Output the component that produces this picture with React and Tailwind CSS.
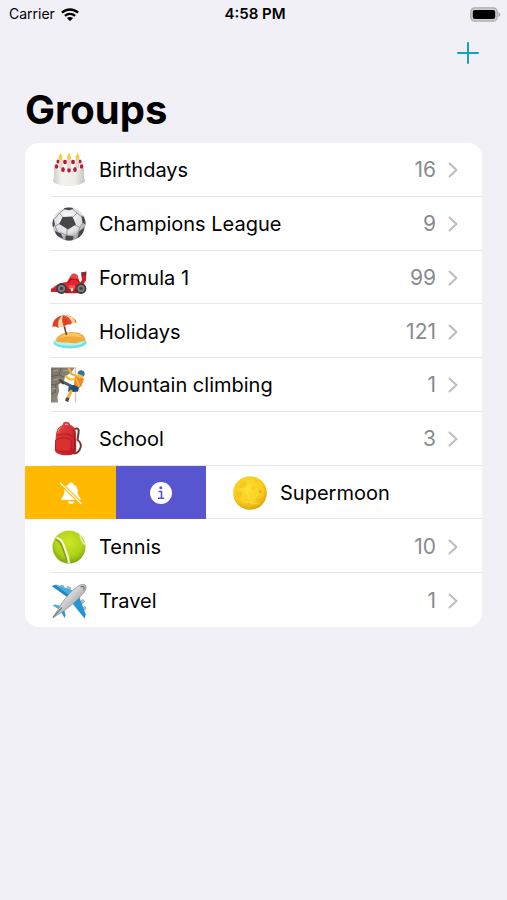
import clsx from 'clsx';

function CakeIcon() {
  return (
    <svg viewBox="0 0 36 36" className="size-9" aria-hidden="true">
      <defs>
        <linearGradient id="cake-side" x1="0" x2="1" y1="0" y2="0">
          <stop offset="0" stopColor="#d3d0cb" />
          <stop offset="0.25" stopColor="#f4f2ee" />
          <stop offset="0.7" stopColor="#efede9" />
          <stop offset="1" stopColor="#c9c6c0" />
        </linearGradient>
      </defs>
      <ellipse cx="18" cy="28.500" rx="16" ry="5" fill="#c9c7c3" />
      <path d="M3 14v14.500c0 3 6.700 5 15 5s15-2 15-5V14z" fill="url(#cake-side)" />
      <ellipse cx="18" cy="14" rx="15" ry="6" fill="#f7f5f0" stroke="#d6d3cc" strokeWidth="0.600" />
      <g fill="#b5173c">
        <ellipse cx="5.500" cy="14.500" rx="1.700" ry="2.200" />
        <ellipse cx="30.500" cy="14.500" rx="1.700" ry="2.200" />
        <ellipse cx="12" cy="17.500" rx="1.800" ry="2.500" />
        <ellipse cx="24" cy="17.500" rx="1.800" ry="2.500" />
        <ellipse cx="18" cy="18" rx="1.800" ry="2.500" />
        <ellipse cx="7" cy="9.500" rx="1.500" ry="1.900" />
        <ellipse cx="29" cy="9.500" rx="1.500" ry="1.900" />
        <ellipse cx="14" cy="10" rx="1.900" ry="2.300" />
        <ellipse cx="22" cy="10" rx="1.900" ry="2.300" />
      </g>
      <g fill="#f0dccb" stroke="#bfa795" strokeWidth="0.400">
        <rect x="8.400" y="7" width="2.400" height="9" rx="0.800" />
        <rect x="16.800" y="7" width="2.400" height="9.500" rx="0.800" />
        <rect x="25.200" y="7" width="2.400" height="9" rx="0.800" />
      </g>
      <g fill="#f3cf45">
        <path d="M9.500 1c1.800 2.600 2.400 4 1.900 5.400-.7 1.600-3.100 1.600-3.800 0C7.100 5 8 3.500 9.500 1z" />
        <path d="M18 1c1.800 2.600 2.400 4 1.900 5.400-.7 1.600-3.100 1.600-3.800 0C15.600 5 16.500 3.500 18 1z" />
        <path d="M26.500 1c1.800 2.600 2.400 4 1.900 5.400-.7 1.600-3.100 1.600-3.800 0-.5-1.400.4-2.900 1.900-5.400z" />
      </g>
    </svg>
  );
}

function SoccerIcon() {
  return (
    <svg viewBox="0 0 36 36" className="size-9" aria-hidden="true">
      <defs>
        <radialGradient id="soccer-ball" cx="0.45" cy="0.35" r="0.65">
          <stop offset="0" stopColor="#ffffff" />
          <stop offset="0.65" stopColor="#dedee1" />
          <stop offset="1" stopColor="#919196" />
        </radialGradient>
        <clipPath id="soccer-clip">
          <circle cx="18" cy="18" r="16.500" />
        </clipPath>
      </defs>
      <circle cx="18" cy="18" r="16.500" fill="url(#soccer-ball)" />
      <g clipPath="url(#soccer-clip)">
        <g fill="none" stroke="#8e8e93" strokeWidth="0.900">
          <path d="M12 11.500 8.500 7M21.500 11.500 26 7M24 19l5 2.500M16 22.500v7M9 17.500 4 20M8.500 7l-5 6M8.500 7 14 2.500M26 7l-5-4.500M26 7l6 5M29 21.500l3.500-6M29 21.500 26.500 28M16 29.500l-6.500-3M16 29.500l6 1M4 20l-2-5M4 20l3 7" />
        </g>
        <g fill="#46464b">
          <path d="m11.500 11 9.800-.5 3.700 8-8 5-8.800-5.500z" />
          <path d="m12.500 0 9 0 .5 3-4 1.200-5-1z" />
          <path d="m30.500 10.500 4.500-.5v9l-3.500-2.500z" />
          <path d="m28 25.500 5-4-1 9-5.500 1.500z" />
          <path d="m14.500 29.500 8 .800-1 5h-7z" />
          <path d="m0 14 2.800-1.500 1 5.500-1.300 3-3 1z" />
          <path d="m4 25 6 2.500 2 5-7-3z" />
        </g>
      </g>
    </svg>
  );
}

function RaceCarIcon() {
  return (
    <svg viewBox="0 0 36 36" className="size-9" aria-hidden="true">
      <path d="m30 12.500 5.500-1-.5 9-3 4h-4l3-4.500z" fill="#cf1f27" />
      <path d="m30.500 12.500 4.500-.700-.3 4-3.700.600z" fill="#7c3039" />
      <path d="M1 29c3-4 9-6.500 15-7l3-5c1-2.500 4-3.500 6.500-2 2 1 2 4 2.500 6l4 3 1 6-14 2L4 31z" fill="#e4262c" />
      <path d="m19 17 2-3c2-1 4-.5 5.500 1.500l.5 3.500-4 .5z" fill="#ee4340" />
      <path d="m17 22.500 3-3.500 6 .5 2 2.500" fill="none" stroke="#9c1019" strokeWidth="1.100" />
      <path d="M0 28.500 6 28l1.500 4H0z" fill="#d1202a" />
      <path d="M14 28.500h16v4.700H14z" fill="#b8141d" />
      <path d="m18 25 6 .5-.5 4-5.500-.5z" fill="#f35a55" />
      <path d="m19.500 28.500 2.500-.300.200 3-2.200.300z" fill="#f6e3df" />
      <circle cx="10.500" cy="28.500" r="5.400" fill="#3a3d40" />
      <circle cx="10.500" cy="28.500" r="3.600" fill="#7c7f82" />
      <circle cx="10.500" cy="28.500" r="1.800" fill="#44474a" />
      <circle cx="30" cy="28.500" r="5.400" fill="#3a3d40" />
      <circle cx="30" cy="28.500" r="3.600" fill="#7c7f82" />
      <circle cx="30" cy="28.500" r="1.800" fill="#44474a" />
    </svg>
  );
}

function BeachIcon() {
  return (
    <svg viewBox="0 0 36 36" className="size-9" aria-hidden="true">
      <ellipse cx="19" cy="28.500" rx="16.500" ry="6" fill="#6fe3e2" />
      <ellipse cx="18.500" cy="27" rx="15" ry="4.800" fill="#b8f3ee" />
      <path d="M5 26c1-4.500 8-8 16-8 7.500 0 13 3.500 13.500 7.500 0 2-4 1.500-7 3-4 1.800-7 .2-11 0-5-.2-11.500.500-11.500-2.500z" fill="#f2a93b" />
      <path d="M8 24c3-3.500 8-5 13-5s9.500 2 11.500 5.500C27 22 14 22 8 24z" fill="#fbc666" />
      <path d="m13 11 2.500 10" stroke="#6f4327" strokeWidth="1.600" />
      <path d="M1.500 13C1 7 6 1.800 12.500 1.200 19 .600 24.500 4 25.500 8.500c-2.500-.5-4.500.2-6 2-2.500-.8-5-.2-6.500 2.500-2-1.300-4-1-5.500 1C5.500 12.300 3 12 1.500 13z" fill="#e63b26" />
      <path d="M12 1.300C8 4 6.500 8 7.500 14c1.500-2 3.500-2.300 5.500-1 1.500-2.700 4-3.300 6.500-2.500C18.500 6.500 16 3 12 1.300z" fill="#fbe3a1" />
      <path d="M12 1.300C10.500 5 11 9 13 13c1.500-2.500 3.800-3.300 6.500-2.500-1-4.300-3.500-7.300-7.500-9.200z" fill="#e0402a" />
      <path d="M12.500 1.200c4.500.8 7.500 4 8.500 8.100 1.200-.8 2.700-1 4.500-.8C24.500 4 19.500.800 12.500 1.200z" fill="#f9dc92" />
      <path d="M21 3.500c2 1.300 3 3 3.500 5l1 0c-.5-2-2-4-4.500-5z" fill="#e63b26" />
    </svg>
  );
}

function ClimberIcon() {
  return (
    <svg viewBox="0 0 36 36" className="size-9" aria-hidden="true">
      <defs>
        <linearGradient id="rock" x1="0" x2="1" y1="0" y2="1">
          <stop offset="0" stopColor="#77716a" />
          <stop offset="0.500" stopColor="#8b8476" />
          <stop offset="1" stopColor="#b9b2a4" />
        </linearGradient>
      </defs>
      <path d="M0 .500h24l-5 6-5 3-1 5-5.500 3 .5 7-1.500 5 .5 6H0z" fill="url(#rock)" />
      <path d="M0 9.500 8 8l5 2M0 18l6-1 4-3M0 27l5-2M10 1 8 8M5 17l-1 8" fill="none" stroke="#675f55" />
      <path d="m2 4 5-1M12 4l6-1M2 13l5-1M1 22l4-.500" stroke="#aaa293" strokeWidth="1.200" />
      <path d="M24.500.500V35" stroke="#f3b4bf" strokeWidth="1.300" />
      <path d="m27 10-6.500-3L18 1.500" fill="none" stroke="#f2b02b" strokeWidth="2.200" strokeLinecap="round" strokeLinejoin="round" />
      <path d="m26 12-7 .5-4-3" fill="none" stroke="#f6bd35" strokeWidth="2.200" strokeLinecap="round" strokeLinejoin="round" />
      <path d="m24 10 6-1 3 3-2.500 7-4 3-4-2z" fill="#ef8a2c" />
      <path d="m25 11 3 8" stroke="#f8c64a" strokeWidth="1.600" />
      <path d="m18 18 5 0 5 2.500-1 4-5 .500-3-1-2 1z" fill="#244b78" />
      <path d="m20 19-7-3.500" stroke="#41606f" strokeWidth="3" strokeLinecap="round" />
      <path d="m12 16-2.500-2.500" stroke="#4b443c" strokeWidth="2.600" strokeLinecap="round" />
      <path d="m20.500 23-1.500 4-2 4" fill="none" stroke="#f2b02b" strokeWidth="2.800" />
      <path d="m15.500 30 3 1.200-1.500 4-3-1.700z" fill="#574557" />
      <circle cx="29.500" cy="8" r="3.200" fill="#f7bd36" />
      <path d="M26.500 6.500c.5-3 3-3.800 5-3 2.500 1 2.800 4 1.300 6-1.800-1.500-3.800-2.500-6.300-3z" fill="#2f73a5" />
    </svg>
  );
}

function BackpackIcon() {
  return (
    <svg viewBox="0 0 36 36" className="size-9" aria-hidden="true">
      <defs>
        <linearGradient id="pack" x1="0" x2="1" y1="0" y2="1">
          <stop offset="0" stopColor="#ea443f" />
          <stop offset="1" stopColor="#b51b24" />
        </linearGradient>
      </defs>
      <path d="M23 8c4-1.500 5.500 0 4.500 4l-1 7c3.500 2 4.500 6 2 10-1.500 2.500-3.500 3.500-6 3.500" fill="none" stroke="#743833" strokeWidth="2" />
      <path d="M12.500 5c0-4.500 5.500-4.500 6 0" fill="none" stroke="#c94347" strokeWidth="2" />
      <path d="M5 13C6 7 9.500 3.500 15.500 3.500c6 0 9.200 3 9.500 9l.3 15c0 4-2 6-6 6.500-4.500.500-8.800.200-11.800-1-3-1-4-3-3.700-6z" fill="url(#pack)" />
      <path d="M6 15c5-3 12-3 16 1" fill="none" stroke="#a31721" strokeWidth="0.800" />
      <path d="M4.500 19.500c3-3.500 12-3.500 15.500 0v9.500c-4 2.500-11.500 2-15.500-.5z" fill="#dc302f" stroke="#a01a23" strokeWidth="0.800" />
      <path d="M22.500 9c1.500 7 1.800 16 0 23" fill="none" stroke="#a01a23" />
      <path d="M10 6.500c-2 1-3 3-3 5" fill="none" stroke="#f7716a" strokeWidth="1.200" strokeLinecap="round" />
    </svg>
  );
}

function MoonIcon() {
  return (
    <svg viewBox="0 0 36 36" className="size-9" aria-hidden="true">
      <defs>
        <radialGradient id="moon" cx="0.45" cy="0.38" r="0.62">
          <stop offset="0" stopColor="#ffe135" />
          <stop offset="0.700" stopColor="#f8cc1d" />
          <stop offset="1" stopColor="#dea30c" />
        </radialGradient>
      </defs>
      <circle cx="18" cy="18" r="16.800" fill="url(#moon)" />
      <g fill="#e5ae16" opacity="0.300">
        <path d="M9 8c3-3 7-2 6 1s-2 4-5 4-3-3-1-5z" />
        <path d="M5 17c3-2 6 0 5 3s-4 3-5 1-1-3 0-4z" />
        <circle cx="21" cy="13" r="2" />
        <circle cx="28" cy="16" r="2" />
        <circle cx="27" cy="24" r="2.500" />
        <circle cx="17" cy="29" r="1.500" />
        <circle cx="24" cy="6" r="1.500" />
      </g>
      <circle cx="28.500" cy="17" r="0.800" fill="#c98d0c" />
      <path d="m19 28-4-11M19 28l7-9M19 28l-10-3M19 28l9 1" stroke="#fff06b" strokeWidth="0.500" opacity="0.800" />
    </svg>
  );
}

function TennisIcon() {
  return (
    <svg viewBox="0 0 36 36" className="size-9" aria-hidden="true">
      <defs>
        <radialGradient id="tennis-ball" cx="0.500" cy="0.350" r="0.650">
          <stop offset="0" stopColor="#cfe62a" />
          <stop offset="0.650" stopColor="#aed318" />
          <stop offset="1" stopColor="#7fa30f" />
        </radialGradient>
      </defs>
      <circle cx="18" cy="18" r="16.500" fill="url(#tennis-ball)" />
      <path d="M5 9.500c5 2 6.500 6 8 11 1.200 4 3 6.500 4.500 13" fill="none" stroke="#84a30f" strokeWidth="3.400" />
      <path d="M5.500 8.500c5.500 2 7 6.500 8.500 11.500 1.200 4 3.500 7 4 14" fill="none" stroke="#f3f7d9" strokeWidth="2.200" />
      <path d="M29 6.200c1 4 2.200 7 5.200 9.300" fill="none" stroke="#e7f0b5" strokeWidth="1.600" />
    </svg>
  );
}

function PlaneIcon() {
  return (
    <svg viewBox="0 0 36 36" className="size-9" aria-hidden="true">
      <defs>
        <linearGradient id="fuselage" x1="0" x2="1" y1="0" y2="1">
          <stop offset="0.250" stopColor="#f4f4f4" />
          <stop offset="0.750" stopColor="#9a9da2" />
        </linearGradient>
      </defs>
      <g fill="#bfc3c8" stroke="#7c8289" strokeWidth="0.600">
        <path d="m9 5 1-3 3 1-1 4zM15.500 6.500l1-3 3 1-1 4.500z" />
        <path d="m30 18 2-1.500 1.500 2-3 3zM31.500 25l2.500-1.500 1 2.500-3.500 2z" />
      </g>
      <path d="m1 3 4-1.500 20 7L19 16z" fill="#46aee6" />
      <path d="m33.500 35.500 1.300-4-7.500-20-7.800 6.500z" fill="#2595d6" />
      <path d="M1 3 19 16l2-2L4 2z" fill="#2583bd" />
      <path d="m1.500 22.500 2.700-1 9 2.500-4 3z" fill="#46aee6" />
      <path d="m13.500 35 1-2.500-2-9-3 4z" fill="#2595d6" />
      <path d="M2 34.500 9 23C14 15 21 7 28 2.500c3-1.800 6.500-1.500 7 .5.500 2-.2 4-2.500 7C27 17 18 24 12 28.500z" fill="url(#fuselage)" stroke="#868b92" strokeWidth="0.700" />
      <path d="M29.500 4c1.500-1 3-.8 3.500.2s.2 2-.500 3" fill="none" stroke="#6b7179" strokeWidth="1.100" />
      <path d="m2 34.500 9-10" stroke="#777d86" strokeWidth="1.200" />
    </svg>
  );
}

function WifiIcon() {
  return (
    <svg viewBox="0 0 18 13" className="h-[13px] w-[18px]" aria-label="Wi-Fi">
      <g fill="none" stroke="#000" strokeWidth="2.300">
        <path d="M.9 4.700c4.500-4.300 11.700-4.300 16.200 0" />
        <path d="M3.900 7.900c2.900-2.700 7.300-2.700 10.200 0" />
      </g>
      <path d="M9 13.200 5.900 10c1.700-1.500 4.500-1.500 6.200 0z" />
    </svg>
  );
}

function BatteryIcon() {
  return (
    <svg viewBox="0 0 31 15" className="h-[15px] w-[31px]" aria-label="Battery full">
      <rect x="0.800" y="0.800" width="26.400" height="13.400" rx="4" fill="#cfcfd2" stroke="#adadb0" strokeWidth="1.300" />
      <rect x="2.800" y="3" width="22.400" height="9" rx="2" />
      <path d="M28.500 5v5c2.500-1 2.500-4 0-5z" fill="#a5a5a8" />
    </svg>
  );
}

function BellSlashIcon() {
  return (
    <svg viewBox="0 0 24 24" className="size-6" aria-hidden="true">
      <path d="M12 1.500c1.400 0 2.300.8 2.500 2 2.700 1 4.200 3.400 4.200 6.300 0 4.200 1 5.700 2.600 7.200.8.800.3 2-.8 2h-17c-1.100 0-1.600-1.200-.8-2 1.600-1.500 2.600-3 2.600-7.200 0-2.900 1.500-5.300 4.200-6.300.2-1.200 1.100-2 2.500-2z" fill="#fff" />
      <path d="M8.800 20.200h6.400c-.3 1.600-1.500 2.600-3.200 2.600s-2.900-1-3.200-2.600z" fill="#fff" />
      <path d="m1.500 2 20.500 20.500" stroke="#ffba00" strokeWidth="3.600" />
      <path d="m1.500 2 20.500 20.500" stroke="#fff" strokeWidth="1.500" strokeLinecap="round" />
    </svg>
  );
}

function InfoIcon() {
  return (
    <svg viewBox="0 0 22 22" className="size-[22px]" aria-hidden="true">
      <circle cx="11" cy="11" r="11" fill="#fff" />
      <circle cx="10.800" cy="5.800" r="1.500" fill="#5855d0" />
      <path d="M8.500 9.500h3v6.500M8 16.200h6" fill="none" stroke="#5855d0" strokeWidth="1.600" />
    </svg>
  );
}

function Chevron() {
  return (
    <svg viewBox="0 0 10 16" className="h-4 w-2.5" aria-hidden="true">
      <path d="m1.500 1.500 7 6.500-7 6.500" fill="none" stroke="#bdbdc0" strokeWidth="2" strokeLinecap="round" strokeLinejoin="round" />
    </svg>
  );
}

const groups = [
  { name: 'Birthdays', count: 16, Icon: CakeIcon },
  { name: 'Champions League', count: 9, Icon: SoccerIcon },
  { name: 'Formula 1', count: 99, Icon: RaceCarIcon },
  { name: 'Holidays', count: 121, Icon: BeachIcon },
  { name: 'Mountain climbing', count: 1, Icon: ClimberIcon },
  { name: 'School', count: 3, Icon: BackpackIcon },
  { name: 'Supermoon', Icon: MoonIcon, swiped: true },
  { name: 'Tennis', count: 10, Icon: TennisIcon },
  { name: 'Travel', count: 1, Icon: PlaneIcon },
];

function SwipeActions() {
  return (
    <div className="flex shrink-0">
      <button type="button" aria-label="Mute" className="flex w-[91px] items-center justify-center bg-[#ffba00]">
        <BellSlashIcon />
      </button>
      <button type="button" aria-label="Info" className="flex w-[90px] items-center justify-center bg-[#5855d0]">
        <InfoIcon />
      </button>
    </div>
  );
}

function GroupRow({ group, last }) {
  const { name, count, Icon, swiped } = group;

  return (
    <li className="flex overflow-hidden">
      {swiped && <SwipeActions />}
      <a href="#" className={clsx('flex min-w-0 flex-1', !swiped && 'pl-[25px]')}>
        <div
          className={clsx(
            'flex min-w-0 flex-1 items-center gap-3 pt-0.5 pr-6',
            swiped ? 'pl-[26px]' : 'pl-px',
            !last && 'border-b border-[#e6e6e8]'
          )}
        >
          <Icon />
          <span className="flex-1 truncate text-xl leading-7 text-black">{name}</span>
          {!swiped && (
            <>
              <span className="text-[21px] leading-7 text-[#8a8a8e]">{count}</span>
              <Chevron />
            </>
          )}
        </div>
      </a>
    </li>
  );
}

export default function App() {
  return (
    <div className="min-h-screen bg-[#f1f0f6] font-['Inter','Liberation_Sans',sans-serif] text-black">
      <header>
        <div className="grid h-7 grid-cols-3 items-center pr-1.5 pl-[9px] text-sm">
          <div className="flex items-center gap-1.5">
            <span>Carrier</span>
            <WifiIcon />
          </div>
          <time className="text-center text-[15px] font-semibold">4:58 PM</time>
          <div className="flex justify-end">
            <BatteryIcon />
          </div>
        </div>
        <div className="flex h-[49px] items-center justify-end pr-7">
          <button type="button" aria-label="Add group">
            <svg viewBox="0 0 22 22" className="size-[22px]" aria-hidden="true">
              <path d="M11 1v20M1 11h20" stroke="#12a3ba" strokeWidth="2" strokeLinecap="round" />
            </svg>
          </button>
        </div>
      </header>

      <main className="px-[25px]">
        <h1 className="py-2 text-[40px] leading-[50px] font-bold">Groups</h1>
        <ul className="grid min-h-[484px] auto-rows-fr overflow-hidden rounded-[14px] bg-white">
          {groups.map((group, i) => (
            <GroupRow key={group.name} group={group} last={i === groups.length - 1} />
          ))}
        </ul>
      </main>
    </div>
  );
}
